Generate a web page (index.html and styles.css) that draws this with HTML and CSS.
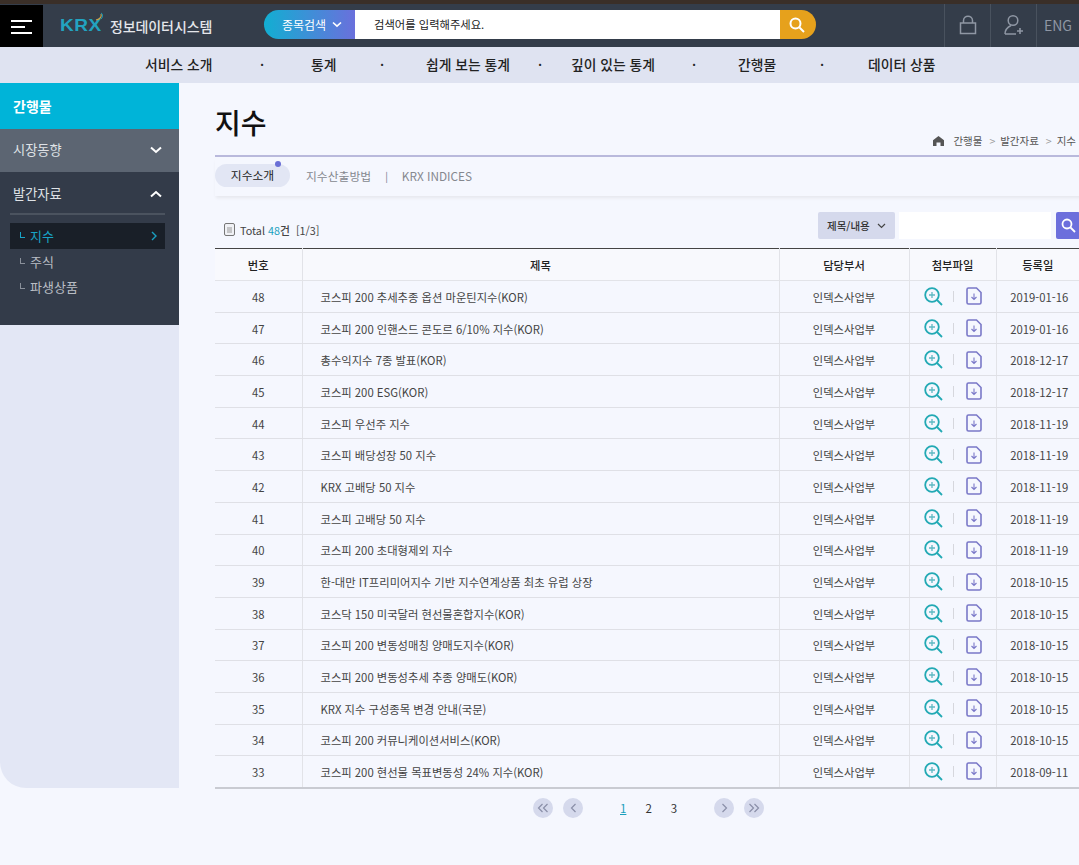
FILE: index.html
```html
<!DOCTYPE html>
<html lang="ko">
<head>
  <meta charset="UTF-8" />
  <title>지수 - 정보데이터시스템</title>
  <link rel="stylesheet" href="styles.css">
</head>
<body>

  <header class="topbar">
    <button class="menu-btn" aria-label="menu"><span></span><span></span><span></span></button>
    <div class="logo">
      <span class="logo-krx">KRX</span>
      <svg class="logo-arc" width="9" height="9" viewBox="0 0 9 9"><path d="M1 8 C5 7 7 5 6 2" fill="none" stroke="#c9a24a" stroke-width="1.2"/><path d="M6 1 C8 2 8 5 6 7" fill="none" stroke="#16a9c9" stroke-width="1"/></svg>
      <span class="logo-name">정보데이터시스템</span>
    </div>
    <div class="search">
      <div class="search-type">종목검색
        <svg width="10" height="7" viewBox="0 0 10 7"><path d="M1 1.5 L5 5.2 L9 1.5" fill="none" stroke="#fff" stroke-width="1.6"/></svg>
      </div>
      <div class="search-input">검색어를 입력해주세요.</div>
      <div class="search-btn">
        <svg width="18" height="18" viewBox="0 0 18 18"><circle cx="7.5" cy="7.5" r="5" fill="none" stroke="#fff" stroke-width="2"/><path d="M11.5 11.5 L16 16" stroke="#fff" stroke-width="2"/></svg>
      </div>
    </div>
    <div class="top-links">
      <div class="top-link">
        <svg width="18" height="20" viewBox="0 0 18 20"><rect x="1.5" y="8" width="15" height="10.5" fill="none" stroke="#8f97a4" stroke-width="1.5"/><path d="M4.5 8 V5.5 C4.5 -0.2 13.5 -0.2 13.5 5.5 V8" fill="none" stroke="#8f97a4" stroke-width="1.5"/></svg>
      </div>
      <div class="top-link">
        <svg width="22" height="22" viewBox="0 0 22 22"><circle cx="10" cy="6.5" r="4.8" fill="none" stroke="#8f97a4" stroke-width="1.5"/><path d="M2 20 C2 14.5 6 12.5 8 11.5 M2 20 H13" fill="none" stroke="#8f97a4" stroke-width="1.5"/><path d="M17 14 V20 M14 17 H20" stroke="#8f97a4" stroke-width="1.6"/></svg>
      </div>
      <div class="top-link lang">ENG</div>
    </div>
  </header>

  <nav class="gnb">
    <a class="gnb-1">서비스 소개</a><i class="dot dot-1">·</i>
    <a class="gnb-2">통계</a><i class="dot dot-2">·</i>
    <a class="gnb-3">쉽게 보는 통계</a><i class="dot dot-3">·</i>
    <a class="gnb-4">깊이 있는 통계</a><i class="dot dot-4">·</i>
    <a class="gnb-5">간행물</a><i class="dot dot-5">·</i>
    <a class="gnb-6">데이터 상품</a>
  </nav>

  <div class="wrap">
    <aside class="side">
      <div class="side-inner">
        <h2 class="side-title">간행물</h2>
        <div class="side-item closed">시장동향
          <svg width="12" height="8" viewBox="0 0 12 8"><path d="M1 1.5 L6 6 L11 1.5" fill="none" stroke="#fff" stroke-width="2"/></svg>
        </div>
        <div class="side-open">
          <div class="side-item open">발간자료
            <svg width="12" height="8" viewBox="0 0 12 8"><path d="M1 6.5 L6 2 L11 6.5" fill="none" stroke="#fff" stroke-width="2"/></svg>
          </div>
          <ul class="side-sub">
            <li class="on">지수
              <svg width="6" height="10" viewBox="0 0 6 10"><path d="M1 1 L5 5 L1 9" fill="none" stroke="#1a9fc0" stroke-width="1.4"/></svg>
            </li>
            <li>주식</li>
            <li>파생상품</li>
          </ul>
        </div>
      </div>
    </aside>

    <main class="content">
      <div class="page-head">
        <h1>지수</h1>
        <div class="crumbs">
          <svg width="11" height="10" viewBox="0 0 11 10"><path d="M5.5 0 L11 4.2 V10 H7.5 V6.5 H3.5 V10 H0 V4.2 Z" fill="#555"/></svg>
          <span class="crumb-first">간행물</span><span class="gt">&gt;</span><span>발간자료</span><span class="gt">&gt;</span><span>지수</span>
        </div>
      </div>

      <div class="tabs">
        <a class="tab on">지수소개</a>
        <a class="tab">지수산출방법</a>
        <span class="tab-sep">|</span>
        <a class="tab">KRX INDICES</a>
      </div>

      <div class="tools">
        <div class="total">
          <svg width="11" height="13" viewBox="0 0 11 13"><rect x="0.5" y="0.5" width="10" height="12" rx="1.5" fill="#f0f1f5" stroke="#777"/><path d="M3 5 H8 M3 7 H8 M3 9 H8" stroke="#999"/></svg>
          <p class="total-text">Total <b>48</b><em>건</em><span>[1/3]</span></p>
        </div>
        <div class="finder">
          <div class="finder-type">제목/내용
            <svg width="9" height="6" viewBox="0 0 9 6"><path d="M1 1 L4.5 4.5 L8 1" fill="none" stroke="#444" stroke-width="1.2"/></svg>
          </div>
          <div class="finder-input"></div>
          <div class="finder-btn">
            <svg width="15" height="15" viewBox="0 0 15 15"><circle cx="6" cy="6" r="4.5" fill="none" stroke="#fff" stroke-width="1.8"/><path d="M9.5 9.5 L14 14" stroke="#fff" stroke-width="1.8"/></svg>
          </div>
        </div>
      </div>

      <table class="list">
        <colgroup><col class="c-no"><col class="c-title"><col class="c-dept"><col class="c-file"><col class="c-date"></colgroup>
        <thead>
          <tr><th>번호</th><th>제목</th><th>담당부서</th><th>첨부파일</th><th>등록일</th></tr>
        </thead>
        <tbody id="rows"></tbody>
      </table>

      <div class="pager">
        <a class="pg"><svg width="12" height="10" viewBox="0 0 12 10"><path d="M5.5 1 L1.5 5 L5.5 9 M10.5 1 L6.5 5 L10.5 9" fill="none" stroke="#8a8fa8" stroke-width="1.2"/></svg></a>
        <a class="pg"><svg width="7" height="10" viewBox="0 0 7 10"><path d="M5.5 1 L1.5 5 L5.5 9" fill="none" stroke="#8a8fa8" stroke-width="1.2"/></svg></a>
        <div class="pg-nums"><a class="on">1</a><a>2</a><a>3</a></div>
        <a class="pg"><svg width="7" height="10" viewBox="0 0 7 10"><path d="M1.5 1 L5.5 5 L1.5 9" fill="none" stroke="#8a8fa8" stroke-width="1.2"/></svg></a>
        <a class="pg"><svg width="12" height="10" viewBox="0 0 12 10"><path d="M1.5 1 L5.5 5 L1.5 9 M6.5 1 L10.5 5 L6.5 9" fill="none" stroke="#8a8fa8" stroke-width="1.2"/></svg></a>
      </div>
    </main>
  </div>

  <script>
    const posts = [
      [48, "코스피 200 추세추종 옵션 마운틴지수(KOR)", "2019-01-16"],
      [47, "코스피 200 인핸스드 콘도르 6/10% 지수(KOR)", "2019-01-16"],
      [46, "총수익지수 7종 발표(KOR)", "2018-12-17"],
      [45, "코스피 200 ESG(KOR)", "2018-12-17"],
      [44, "코스피 우선주 지수", "2018-11-19"],
      [43, "코스피 배당성장 50 지수", "2018-11-19"],
      [42, "KRX 고배당 50 지수", "2018-11-19"],
      [41, "코스피 고배당 50 지수", "2018-11-19"],
      [40, "코스피 200 초대형제외 지수", "2018-11-19"],
      [39, "한-대만 IT프리미어지수 기반 지수연계상품 최초 유럽 상장", "2018-10-15"],
      [38, "코스닥 150 미국달러 현선물혼합지수(KOR)", "2018-10-15"],
      [37, "코스피 200 변동성매칭 양매도지수(KOR)", "2018-10-15"],
      [36, "코스피 200 변동성추세 추종 양매도(KOR)", "2018-10-15"],
      [35, "KRX 지수 구성종목 변경 안내(국문)", "2018-10-15"],
      [34, "코스피 200 커뮤니케이션서비스(KOR)", "2018-10-15"],
      [33, "코스피 200 현선물 목표변동성 24% 지수(KOR)", "2018-09-11"]
    ];

    const viewIcon = `<svg width="19" height="19" viewBox="0 0 19 19"><circle cx="8" cy="8" r="6.8" fill="none" stroke="#22a9b4" stroke-width="1.8"/><path d="M13 13 L18 18" stroke="#22a9b4" stroke-width="1.8"/><path d="M8 5 V11 M5 8 H11" stroke="#5cb8c2" stroke-width="1.3"/></svg>`;
    const fileIcon = `<svg width="16" height="18" viewBox="0 0 16 18"><path d="M2.5 1 H10.5 L15 5.5 V15.5 A1.5 1.5 0 0 1 13.5 17 H2.5 A1.5 1.5 0 0 1 1 15.5 V2.5 A1.5 1.5 0 0 1 2.5 1 Z" fill="none" stroke="#7a78c8" stroke-width="1.6"/><path d="M8 6.5 V12.5 M5.5 10 L8 12.5 L10.5 10" fill="none" stroke="#7a78c8" stroke-width="1.1"/></svg>`;

    document.getElementById("rows").innerHTML = posts.map(p => `
      <tr>
        <td>${p[0]}</td>
        <td class="subject">${p[1]}</td>
        <td>인덱스사업부</td>
        <td><div class="files">${viewIcon}<i></i>${fileIcon}</div></td>
        <td class="date">${p[2]}</td>
      </tr>`).join("");
  </script>
</body>
</html>
```

FILE: styles.css
```css
* {
  box-sizing: border-box;
}

html, body {
  margin: 0;
  padding: 0;
}

body {
  width: 1079px;
  height: 865px;
  overflow: hidden;
  background: #f5f7fe;
  color: #333;
  font-family: "Noto Sans CJK KR", "Noto Sans", sans-serif;
  font-size: 11px;
}

/* top bar */
.topbar {
  display: flex;
  height: 47px;
  background: #343d4a;
  border-top: 4px solid #3a2f28;
}

.menu-btn {
  display: flex;
  flex-direction: column;
  justify-content: center;
  gap: 4px;
  width: 43px;
  height: 43px;
  padding: 0 11px;
  margin-top: 1px;
  background: #000;
  border: none;
}

.menu-btn span {
  display: block;
  height: 2px;
  background: #fff;
}

.menu-btn span:nth-child(2) {
  width: 14px;
}

.logo {
  display: flex;
  align-items: center;
  width: 221px;
  padding-left: 17px;
  position: relative;
}

.logo-krx {
  width: 50px;
  color: #22a3c0;
  font-family: "Liberation Sans", sans-serif;
  font-size: 17px;
  font-weight: bold;
  letter-spacing: 0.5px;
  transform: scaleX(1.12);
  transform-origin: left;
}

.logo-arc {
  position: absolute;
  left: 52px;
  top: 8px;
}

.logo-name {
  color: #e4e6ea;
  font-size: 14px;
  font-weight: 500;
  letter-spacing: -0.1px;
  white-space: nowrap;
}

.search {
  display: flex;
  height: 29px;
  margin-top: 6px;
  width: 552px;
}

.search-type {
  display: flex;
  align-items: center;
  gap: 6px;
  width: 91px;
  padding-left: 18px;
  color: #fff;
  font-size: 12px;
  background: linear-gradient(90deg, #12aed2, #6a70dc);
  border-radius: 15px 0 0 15px;
}

.search-input {
  flex: 1;
  padding-left: 19px;
  background: #fff;
  color: #222;
  font-size: 11.3px;
  line-height: 29px;
}

.search-btn {
  display: flex;
  align-items: center;
  justify-content: center;
  width: 36px;
  background: #e6a11c;
  border-radius: 0 15px 15px 0;
  padding-right: 3px;
}

.top-links {
  display: flex;
  margin-left: 128px;
}

.top-link {
  display: flex;
  align-items: center;
  justify-content: center;
  width: 46px;
  height: 43px;
  border-left: 1px solid #49525e;
  padding-bottom: 1px;
}

.lang {
  width: 43px;
  color: #8f97a4;
  font-size: 14px;
}

/* main menu */
.gnb {
  position: relative;
  height: 36px;
  background: #dfe3f1;
  color: #222;
  font-size: 13.8px;
  font-weight: 500;
  line-height: 35px;
}

.gnb a, .gnb .dot {
  position: absolute;
  top: 0;
  white-space: nowrap;
  font-style: normal;
}

.gnb-1 { left: 145px; }
.gnb-2 { left: 311px; }
.gnb-3 { left: 426px; }
.gnb-4 { left: 571px; }
.gnb-5 { left: 738px; }
.gnb-6 { left: 868px; }
.dot-1 { left: 260px; }
.dot-2 { left: 380px; }
.dot-3 { left: 538px; }
.dot-4 { left: 692px; }
.dot-5 { left: 820px; }

/* layout */
.wrap {
  display: flex;
}

.side {
  width: 179px;
  height: 705px;
  flex-shrink: 0;
  background: #e3e7f5;
  border-radius: 0 0 0 26px;
}

.side-title {
  height: 46px;
  margin: 0;
  padding-left: 13px;
  background: #00b4d8;
  color: #fff;
  font-size: 14px;
  font-weight: 700;
  line-height: 46px;
}

.side-item {
  display: flex;
  align-items: center;
  justify-content: space-between;
  height: 43px;
  padding: 0 17px 0 13px;
  color: #dfe2e6;
  font-size: 13.2px;
}

.side-item.closed {
  padding-bottom: 2px;
  background: #5c6572;
}

.side-open {
  height: 153px;
  background: #333b49;
  padding-bottom: 10px;
}

.side-item.open {
  position: relative;
}

.side-item.open::after {
  content: "";
  position: absolute;
  left: 10px;
  right: 14px;
  bottom: 0;
  height: 2px;
  background: #4b535f;
}

.side-sub {
  list-style: none;
  margin: 8px 14px 0 10px;
  padding: 0;
}

.side-sub li {
  display: flex;
  align-items: center;
  justify-content: space-between;
  height: 25.5px;
  padding: 0 8px 0 20px;
  color: #b9bdc4;
  font-size: 13px;
  position: relative;
}

.side-sub li::before {
  content: "";
  position: absolute;
  left: 10px;
  top: 9px;
  width: 4px;
  height: 5px;
  border-left: 1px solid #8a909a;
  border-bottom: 1px solid #8a909a;
}

.side-sub li.on {
  background: #191f28;
  color: #18a4c6;
}

.side-sub li.on::before {
  border-color: #18a4c6;
}

/* content */
.content {
  width: 900px;
  margin-left: 36px;
  flex-shrink: 0;
}

.page-head {
  position: relative;
  height: 74px;
  border-bottom: 2px solid #b9b9dc;
}

.page-head h1 {
  margin: 0;
  padding-top: 18px;
  color: #111;
  font-size: 28px;
  font-weight: 500;
  line-height: 42px;
}

.crumbs {
  position: absolute;
  right: 39px;
  top: 50px;
  display: flex;
  align-items: center;
  color: #555;
  font-size: 10.5px;
  white-space: nowrap;
}

.crumb-first {
  margin-left: 9px;
}

.gt {
  margin: 0 5px 0 7px;
  color: #999;
  font-size: 10.5px;
}

.tabs {
  display: flex;
  align-items: center;
  height: 39px;
  padding-bottom: 2px;
  color: #85888f;
  font-size: 11.8px;
  box-shadow: 0 3px 3px -1px #e6e7ed;
}

.tab {
  white-space: nowrap;
}

.tab.on {
  position: relative;
  width: 75px;
  height: 23px;
  margin-right: 16px;
  background: #e2e6f4;
  border-radius: 12px;
  color: #222;
  text-align: center;
  line-height: 22px;
}

.tab.on::after {
  content: "";
  position: absolute;
  left: 60px;
  top: -3px;
  width: 6px;
  height: 6px;
  background: #6a6fd6;
  border-radius: 50%;
}

.tab-sep {
  margin: 0 14px;
  font-size: 10px;
  color: #777b90;
}

.tools {
  display: flex;
  justify-content: space-between;
  height: 52px;
  padding-top: 16px;
}

.total {
  display: flex;
  align-items: center;
  gap: 5px;
  height: 27px;
  margin-top: 4px;
  padding-left: 9px;
}

.total-text {
  margin: 0;
  font-size: 10.8px;
  color: #444;
  white-space: nowrap;
}

.total-text b {
  color: #1aa0bd;
  font-weight: 400;
}

.total-text em {
  font-style: normal;
  font-weight: 500;
}

.total-text span {
  margin-left: 6px;
}

.finder {
  display: flex;
  height: 27px;
  margin-right: 35px;
  width: 262px;
}

.finder-type {
  display: flex;
  align-items: center;
  gap: 7px;
  width: 77px;
  padding-left: 9px;
  background: #d5d9ec;
  border-radius: 2px;
  color: #333;
  font-size: 10.5px;
  font-weight: 500;
}

.finder-input {
  width: 152px;
  margin-left: 4px;
  background: #fff;
}

.finder-btn {
  display: flex;
  align-items: center;
  justify-content: center;
  width: 24px;
  margin-left: 5px;
  background: #6c6fdc;
  border-radius: 2px;
  flex-shrink: 0;
}

/* board */
.list {
  width: 864px;
  table-layout: fixed;
  border-collapse: collapse;
  border-top: 1px solid #444;
  border-bottom: 2px solid #c9cbd2;
}

.c-no { width: 87px; }
.c-title { width: 477px; }
.c-dept { width: 130px; }
.c-file { width: 87px; }
.c-date { width: 83px; }

.list th {
  height: 32px;
  padding: 0;
  color: #222;
  font-size: 11.3px;
  font-weight: 500;
  border-left: 1px solid #e2e3e8;
  border-bottom: 1px solid #e2e3e8;
  background: #f8f9fd;
}

.list td {
  height: 31.7px;
  padding: 1px 0 0;
  color: #444;
  font-size: 11.3px;
  text-align: center;
  border-left: 1px solid #e2e3e8;
  border-bottom: 1px solid #dfe0e6;
}

.list th:first-child, .list td:first-child {
  border-left: none;
}

.list td.subject {
  padding-left: 18px;
  text-align: left;
  white-space: nowrap;
}

.list td.date {
  padding-left: 3px;
}

.files {
  display: flex;
  align-items: center;
  justify-content: center;
  margin-top: -1px;
}

.files i {
  width: 1px;
  height: 11px;
  margin: 0 12px 0 10px;
  background: #d6d7dd;
}

.pager {
  display: flex;
  align-items: center;
  height: 34px;
  margin-top: 2px;
  padding-left: 318px;
  gap: 10px;
}

.pg {
  display: flex;
  align-items: center;
  justify-content: center;
  width: 20px;
  height: 20px;
  background: #d5d9ec;
  border-radius: 50%;
}

.pg-nums {
  display: flex;
  width: 111px;
  padding-left: 27px;
  gap: 19px;
  color: #333;
  font-size: 11.5px;
}

.pg-nums .on {
  color: #1aa0bd;
  text-decoration: underline;
}
```
